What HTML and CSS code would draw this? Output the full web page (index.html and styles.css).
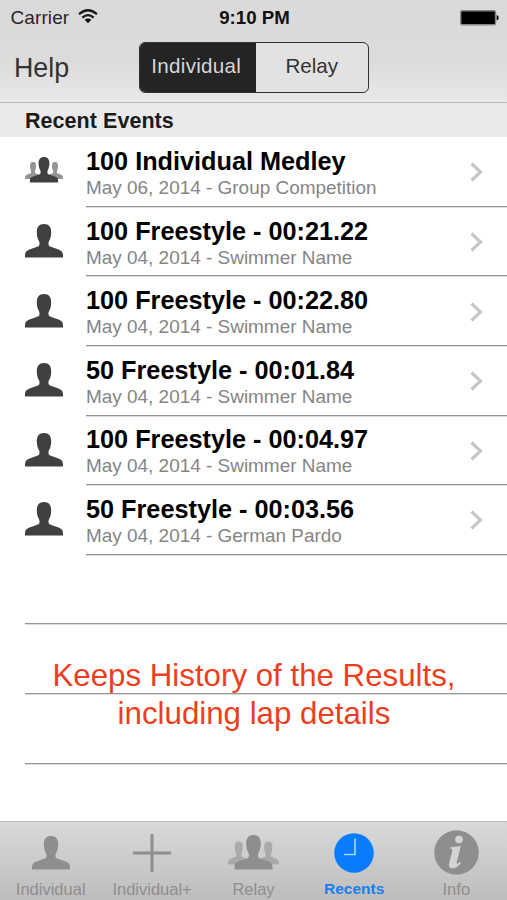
FILE: index.html
```html
<!DOCTYPE html>
<html lang="en">
<head>
<meta charset="utf-8">
<title>Recent Events</title>
<link rel="stylesheet" href="styles.css">
</head>
<body>
<svg class="defs" aria-hidden="true">
  <symbol id="person" viewBox="0 0 38 34" preserveAspectRatio="none"><path d="M19 0C14 0 11.700 3.200 11.800 8.500C11.900 12.500 12.600 15 14 17.200C14.600 18.300 14.600 19.300 14.400 20.800C14.200 22 13.300 22.500 11.500 23.100L4.500 25.500C1.500 26.600 .2 28 0 31V33.500H38V31C37.800 28 36.500 26.600 33.500 25.500L26.500 23.100C24.700 22.500 23.800 22 23.600 20.800C23.400 19.300 23.400 18.300 24 17.200C25.400 15 26.100 12.500 26.200 8.500C26.300 3.200 24 0 19 0Z"/></symbol>
  <symbol id="group" viewBox="0 0 38 26">
    <g opacity=".55"><use href="#person" x="0" y="4.700" width="16" height="17.500"/><use href="#person" x="22" y="4.700" width="16" height="17.500"/></g>
    <use href="#person" x="4.700" y="0" width="28.600" height="26" />
  </symbol>
</svg>
<div class="screen">
  <header class="header">
    <div class="status">
      <div class="carrier"><span>Carrier</span>
        <svg class="wifi" viewBox="0 0 20 15"><g fill="none" stroke="#161616" stroke-width="2.200"><path d="M1 5.200Q10-2.700 19 5.200"/><path d="M4.300 8.600Q10 3.800 15.700 8.600"/></g><path d="M6.600 10.700Q10 8.100 13.400 10.700L10 14.300Z" fill="#161616"/></svg>
      </div>
      <div class="time">9:10 PM</div>
      <svg class="battery" viewBox="0 0 39 16"><rect x=".7" y=".7" width="34.800" height="14" rx="1.500" stroke="#858585" stroke-width="1.400"/><path d="M36.700 5Q38.700 5.500 38.700 7.700T36.700 10.400Z"/></svg>
    </div>
    <div class="nav">
      <span class="help">Help</span>
      <div class="segments"><span class="segment selected">Individual</span><span class="segment relay">Relay</span></div>
    </div>
  </header>
  <h1 class="section">Recent Events</h1>
  <main class="list">
    <div class="row"><svg class="group"><use href="#group"/></svg><div class="event"><div><div class="title">100 Individual Medley</div><div class="detail">May 06, 2014 - Group Competition</div></div><svg class="chevron" viewBox="0 0 13 20"><path d="M1.500 1.500L10.500 10L1.500 18.500"/></svg></div></div>
    <div class="row"><svg class="person"><use href="#person"/></svg><div class="event"><div><div class="title">100 Freestyle - 00:21.22</div><div class="detail">May 04, 2014 - Swimmer Name</div></div><svg class="chevron" viewBox="0 0 13 20"><path d="M1.500 1.500L10.500 10L1.500 18.500"/></svg></div></div>
    <div class="row"><svg class="person"><use href="#person"/></svg><div class="event"><div><div class="title">100 Freestyle - 00:22.80</div><div class="detail">May 04, 2014 - Swimmer Name</div></div><svg class="chevron" viewBox="0 0 13 20"><path d="M1.500 1.500L10.500 10L1.500 18.500"/></svg></div></div>
    <div class="row"><svg class="person"><use href="#person"/></svg><div class="event"><div><div class="title">50 Freestyle - 00:01.84</div><div class="detail">May 04, 2014 - Swimmer Name</div></div><svg class="chevron" viewBox="0 0 13 20"><path d="M1.500 1.500L10.500 10L1.500 18.500"/></svg></div></div>
    <div class="row"><svg class="person"><use href="#person"/></svg><div class="event"><div><div class="title">100 Freestyle - 00:04.97</div><div class="detail">May 04, 2014 - Swimmer Name</div></div><svg class="chevron" viewBox="0 0 13 20"><path d="M1.500 1.500L10.500 10L1.500 18.500"/></svg></div></div>
    <div class="row"><svg class="person"><use href="#person"/></svg><div class="event"><div><div class="title">50 Freestyle - 00:03.56</div><div class="detail">May 04, 2014 - German Pardo</div></div><svg class="chevron" viewBox="0 0 13 20"><path d="M1.500 1.500L10.500 10L1.500 18.500"/></svg></div></div>
    <div class="empty"></div><div class="empty"></div><div class="empty"></div>
    <p class="caption">Keeps History of the Results,<br>including lap details</p>
  </main>
  <nav class="tabs">
    <div class="tab"><div class="glyph"><svg class="person"><use href="#person"/></svg></div><span>Individual</span></div>
    <div class="tab"><div class="glyph"><svg width="38" height="38" viewBox="0 0 38 38"><path d="M19 0V38M0 19H38" stroke="#8e8e8e" stroke-width="3"/></svg></div><span>Individual+</span></div>
    <div class="tab"><div class="glyph"><svg class="tab-group"><use href="#group"/></svg></div><span>Relay</span></div>
    <div class="tab active"><div class="glyph"><svg width="40" height="40" viewBox="0 0 40 40"><circle cx="20" cy="20" r="19.800" fill="#087cff"/><path d="M21 5.500V21.500H10" fill="none" stroke="#a9d0f5" stroke-width="1.700"/></svg></div><span>Recents</span></div>
    <div class="tab"><div class="glyph"><svg width="45" height="45" viewBox="0 0 45 45"><circle cx="22.500" cy="22.500" r="22.300" fill="#8e8e8e"/><circle cx="25" cy="9.500" r="3.800" fill="#d4d4d4"/><path d="M16.500 17.200L26.800 16L22.700 32.300C22.300 34.300 23.400 34.300 25.800 31.700L27 32.700C24.200 36.500 21.800 38.200 18.800 38.200C15.500 38.200 14.300 36.500 15.100 33.200L18.300 20.900C18.700 19.300 18 18.900 16.200 18.700Z" fill="#d4d4d4"/></svg></div><span>Info</span></div>
  </nav>
</div>
</body>
</html>
```

FILE: styles.css
```css
* { box-sizing: border-box; }
body { margin: 0; font-family: "Liberation Sans", Arial, sans-serif; background: #fff; }
svg { display: block; flex: none; }
.defs { position: absolute; width: 0; height: 0; }
.screen { width: 507px; height: 900px; display: flex; flex-direction: column; overflow: hidden; }

.header { height: 103px; flex: none; border-bottom: 1px solid #bcbcbc; background: linear-gradient(#d9d9d9, #dcdcdc 60%, #e8e8e8); }
.status { height: 35px; display: grid; grid-template-columns: 1fr auto 1fr; align-items: center; padding: 0 8.500px 0 10.500px; color: #262626; }
.carrier { display: flex; align-items: center; gap: 9px; font-size: 19px; line-height: 35px; letter-spacing: .1px; }
.wifi { width: 20px; height: 15px; margin-top: -2px; }
.time { font-size: 18.700px; line-height: 35px; font-weight: bold; color: #111; }
.battery { width: 39px; height: 16px; justify-self: end; }
.nav { height: 66px; display: grid; grid-template-columns: 125px 230px; padding-left: 14px; }
.help { font-size: 26.800px; line-height: 67px; color: #333; }
.segments { display: flex; width: 230px; height: 51px; margin-top: 7px; border: 1.500px solid #333; border-radius: 6px; overflow: hidden; background: #e2e2e2; }
.segment { flex: 1; text-align: center; font-size: 20.600px; line-height: 46px; letter-spacing: .3px; color: #333; }
.segment.selected { background: #242424; color: #d7d7d7; padding-right: 3px; }
.relay { letter-spacing: 0; }

.section { height: 34px; flex: none; margin: 0; padding-left: 25px; background: #eaeaea; font-size: 21.500px; line-height: 36px; letter-spacing: .05px; color: #1b1b1b; }
.list { position: relative; height: 684px; flex: none; padding-top: .200px; }
.row { height: 69.600px; display: flex; align-items: center; padding-left: 25px; color: #404040; }
.person, .group { fill: currentColor; }
.person { width: 38px; height: 34px; }
.row .person { margin-top: -1px; }
.group { width: 38px; height: 26px; margin-top: -3px; }
.event { flex: 1; height: 100%; margin-left: 23px; padding-right: 24px; border-bottom: 1px solid #929292; box-shadow: 0 1px 0 #dedede; display: flex; align-items: center; justify-content: space-between; }
.title { padding-top: 4px; font-size: 25.250px; line-height: 28px; font-weight: bold; color: #000; }
.detail { font-size: 18.950px; line-height: 25px; color: #858585; }
.chevron { width: 13px; height: 20px; margin-top: 2px; fill: none; stroke: #c7c7c7; stroke-width: 3.200; }
.empty { height: 69.600px; margin-left: 25px; border-bottom: 1px solid #969696; box-shadow: 0 1px 0 #dedede; }
.caption { position: absolute; left: 1px; right: 0; top: 520px; margin: 0; text-align: center; font-size: 31.250px; line-height: 38px; color: #ee3d1c; }

.tabs { height: 79px; flex: none; display: grid; grid-template-columns: repeat(5, 1fr); border-top: 1px solid #bcbcbc; background: linear-gradient(#d9d9d9, #bdbdbd); }
.tab { display: flex; flex-direction: column; align-items: center; font-size: 16.500px; line-height: 20px; color: #8e8e8e; }
.glyph { height: 57px; padding-top: 4px; display: flex; align-items: center; }
.tab-group { width: 51px; height: 35px; fill: currentColor; }
.active { padding-right: 1.500px; color: #187fee; font-weight: bold; font-size: 15.500px; }
```
